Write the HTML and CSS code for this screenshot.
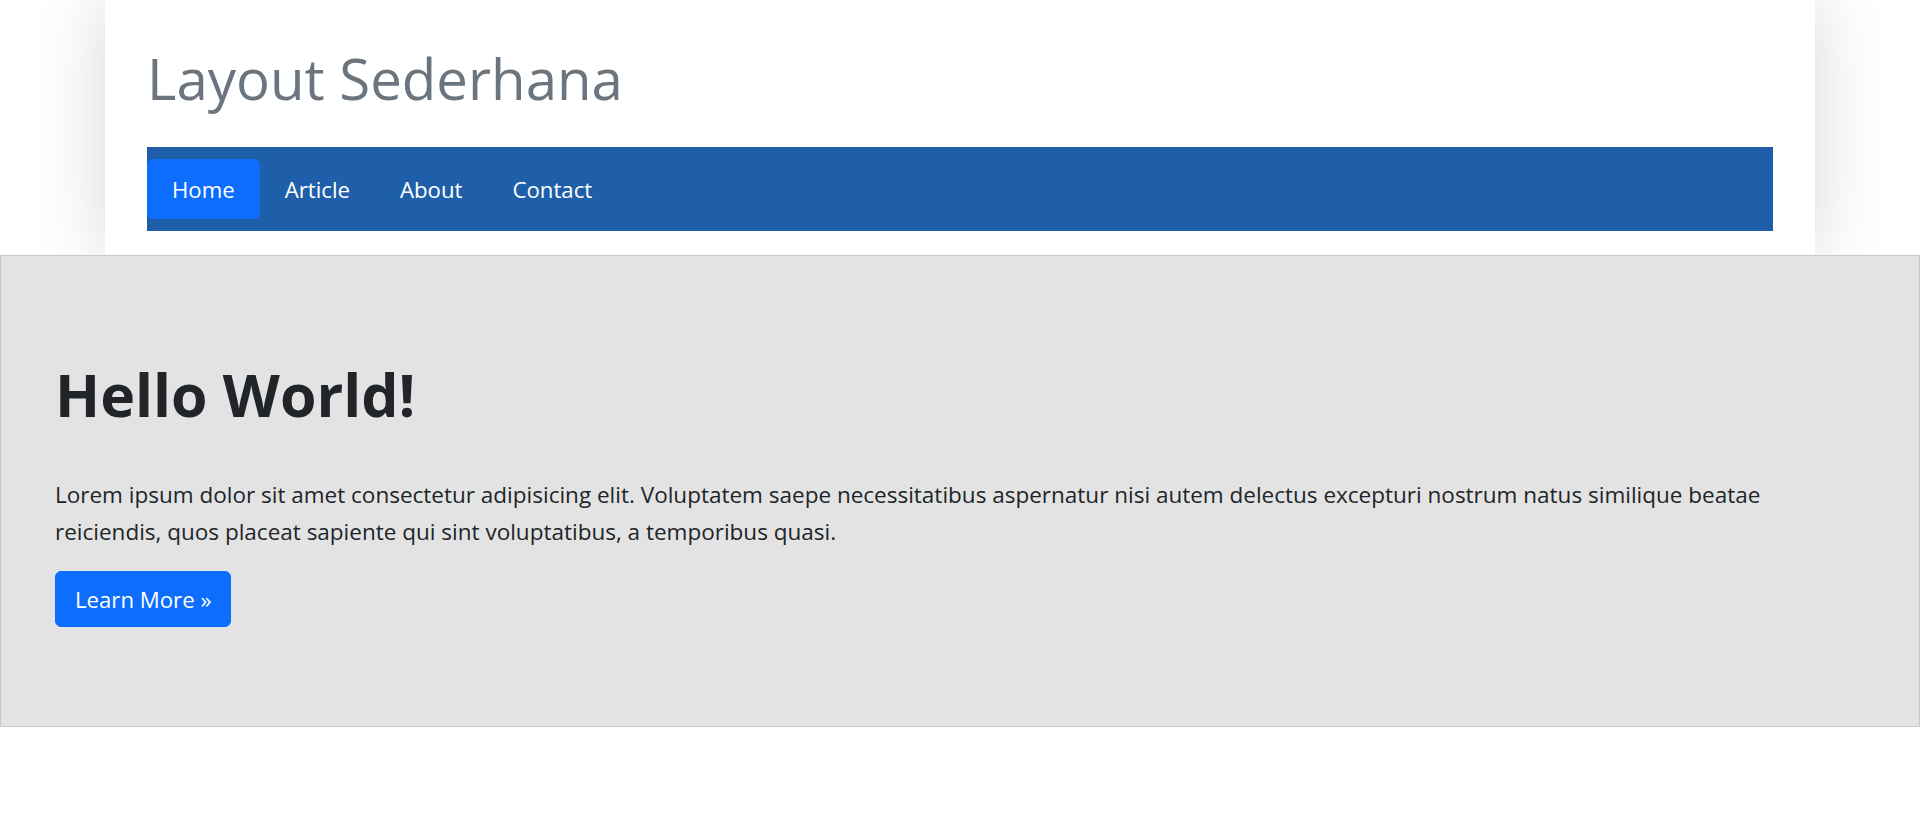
FILE: index.html
```html
<!DOCTYPE html>
<html lang="id">
<head>
<meta charset="utf-8">
<title>Layout Sederhana</title>
<link rel="stylesheet" href="styles.css">
</head>
<body>
  <header class="page-header">
    <h1 class="site-title">Layout Sederhana</h1>
    <nav class="main-nav">
      <a class="nav-link active" href="#">Home</a>
      <a class="nav-link" href="#">Article</a>
      <a class="nav-link" href="#">About</a>
      <a class="nav-link" href="#">Contact</a>
    </nav>
  </header>
  <section class="jumbotron">
    <h2 class="hero-title">Hello World!</h2>
    <p class="hero-text">Lorem ipsum dolor sit amet consectetur adipisicing elit. Voluptatem saepe necessitatibus aspernatur nisi autem delectus excepturi nostrum natus similique beatae reiciendis, quos placeat sapiente qui sint voluptatibus, a temporibus quasi.</p>
    <a class="btn-primary" href="#">Learn More &raquo;</a>
  </section>
</body>
</html>
```
FILE: styles.css
```css
* { box-sizing: border-box; }

html, body {
  margin: 0;
  padding: 0;
  background: #ffffff;
}

body {
  font-family: "Open Sans", "Noto Sans", sans-serif;
  color: #212529;
}

.page-header {
  width: 1710px;
  margin: 0 auto;
  padding: 45px 42px 24px;
  background: #ffffff;
  box-shadow: 0 0 70px rgba(0, 0, 0, 0.16);
}

.site-title {
  margin: 0 0 34px;
  font-size: 56.4px;
  line-height: 68px;
  font-weight: 400;
  color: #6c757d;
}

.main-nav {
  display: flex;
  padding: 12px 0;
  background: #1f5faa;
}

.nav-link {
  display: block;
  padding: 12px 25px 10px;
  font-size: 22.2px;
  line-height: 38px;
  color: #ffffff;
  text-decoration: none;
  border-radius: 6px;
}

.nav-link.active {
  background: #0d6efd;
}

.jumbotron {
  background: #e3e3e3;
  border: 1px solid #c8c8c8;
  padding: 103px 54px 99px;
}

.hero-title {
  margin: 0 0 46px;
  font-size: 59px;
  line-height: 71px;
  font-weight: 700;
  color: #212529;
}

.hero-text {
  margin: 0 0 21px;
  font-size: 22.5px;
  line-height: 37px;
  color: #212529;
}

.btn-primary {
  display: inline-block;
  padding: 11px 19px 9px;
  font-size: 22.2px;
  line-height: 34px;
  color: #ffffff;
  background: #0d6efd;
  border: 1px solid #0d6efd;
  border-radius: 6px;
  text-decoration: none;
}
```
